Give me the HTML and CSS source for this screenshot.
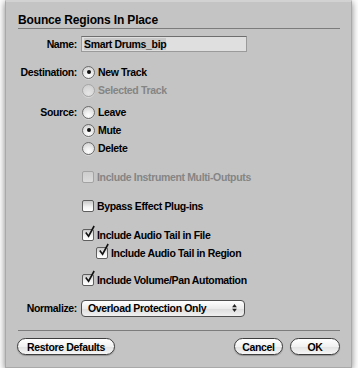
FILE: index.html
```html
<!DOCTYPE html>
<html lang="en">

<head>
  <meta charset="UTF-8">
  <title>Bounce Regions In Place</title>
  <link rel="stylesheet" href="styles.css">
</head>

<body>
  <div class="dialog">
    <div class="title">Bounce Regions In Place</div>
    <div class="rule"></div>

    <div class="row row-name">
      <span class="label">Name:</span>
      <div class="field"><span class="sel">Smart Drums_bip</span></div>
    </div>

    <div class="row row-dest">
      <span class="label">Destination:</span>
      <span class="radio on"></span><span class="text">New Track</span>
    </div>
    <div class="row">
      <span class="label"></span>
      <span class="radio off"></span><span class="text dim">Selected Track</span>
    </div>

    <div class="row row-src">
      <span class="label">Source:</span>
      <span class="radio"></span><span class="text">Leave</span>
    </div>
    <div class="row">
      <span class="label"></span>
      <span class="radio on"></span><span class="text">Mute</span>
    </div>
    <div class="row">
      <span class="label"></span>
      <span class="radio"></span><span class="text">Delete</span>
    </div>

    <div class="row gap11">
      <span class="label"></span>
      <span class="check off"></span><span class="text dim">Include Instrument Multi-Outputs</span>
    </div>
    <div class="row gap11">
      <span class="label"></span>
      <span class="check"></span><span class="text">Bypass Effect Plug-ins</span>
    </div>
    <div class="row gap11">
      <span class="label"></span>
      <span class="check on"><svg viewBox="0 0 14 14"><path d="M3 7 L6 11 L12 0" /></svg></span><span class="text">Include Audio Tail in File</span>
    </div>
    <div class="row sub">
      <span class="label"></span>
      <span class="check on"><svg viewBox="0 0 14 14"><path d="M3 7 L6 11 L12 0" /></svg></span><span class="text">Include Audio Tail in Region</span>
    </div>
    <div class="row gap9">
      <span class="label"></span>
      <span class="check on"><svg viewBox="0 0 14 14"><path d="M3 7 L6 11 L12 0" /></svg></span><span class="text">Include Volume/Pan Automation</span>
    </div>

    <div class="row row-norm">
      <span class="label">Normalize:</span>
      <div class="popup">
        <span>Overload Protection Only</span>
        <svg class="arrows" viewBox="0 0 6 10"><path d="M3 0 L6 4 L0 4 Z M0 6 L6 6 L3 10 Z" /></svg>
      </div>
    </div>

    <div class="rule rule-bottom"></div>

    <div class="buttons">
      <button class="btn btn-restore">Restore Defaults</button>
      <span class="spacer"></span>
      <button class="btn btn-cancel">Cancel</button>
      <button class="btn btn-ok">OK</button>
    </div>
  </div>
</body>

</html>
```

FILE: styles.css
```css
body {
  margin: 0;
  background: #fff;
  font-family: "Liberation Sans", Arial, sans-serif;
  font-size: 10.5px;
  font-weight: bold;
  letter-spacing: -0.35px;
  color: #000;
}

.dialog {
  box-sizing: border-box;
  width: 347px;
  height: 368px;
  margin-left: 5px;
  background: #c4c4c4;
  border: 1px solid #a9a9a9;
  border-top: 2px solid #d2d2d2;
  box-shadow: 0 2px 7px rgba(0, 0, 0, 0.5);
}

.title {
  height: 24px;
  padding-left: 12px;
  font-size: 12px;
  line-height: 37px;
  letter-spacing: -0.15px;
}

.rule {
  height: 1px;
  margin: 2px 11px 0 12px;
  background: #7c7c7c;
}

/* form rows */
.row {
  display: flex;
  align-items: center;
  height: 18px;
}

.label {
  flex: none;
  width: 75px;
  padding-right: 4px;
  box-sizing: border-box;
  text-align: right;
}

.text {
  margin-left: 3px;
}

.dim {
  color: #858585;
}

.row-name {
  margin-top: 6px;
}

.row-dest {
  margin-top: 10px;
}

.row-src {
  margin-top: 4px;
}

.gap11 {
  margin-top: 11px;
}

.gap9 {
  margin-top: 9px;
}

.sub {
  padding-left: 14px;
}

.row-norm {
  margin-top: 10px;
}

/* text field */
.field {
  box-sizing: border-box;
  width: 166px;
  height: 16px;
  padding: 1px 0 0 2px;
  background: #dfdfdf;
  border: 1px solid #9a9a9a;
  border-top-color: #6e6e6e;
}

.sel {
  background: #c8c8c8;
}

/* radio buttons */
.radio {
  flex: none;
  box-sizing: border-box;
  width: 13px;
  height: 13px;
  margin-left: 1px;
  border-radius: 50%;
  border: 1px solid #6b6b6b;
  background: radial-gradient(circle at 50% 75%, #ffffff 0, #eaeaea 45%, #c9c9c9 100%);
  box-shadow: 0 1px 0 rgba(255, 255, 255, 0.35);
  position: relative;
}

.radio.on::after {
  content: "";
  position: absolute;
  left: 3.5px;
  top: 3.5px;
  width: 4px;
  height: 4px;
  border-radius: 50%;
  background: #111;
}

.radio.off {
  border-color: #a6a6a6;
  background: radial-gradient(circle at 50% 75%, #e6e6e6 0, #d6d6d6 60%, #c8c8c8 100%);
}

/* checkboxes */
.check {
  flex: none;
  box-sizing: border-box;
  width: 12px;
  height: 12px;
  margin-left: 1px;
  border-radius: 2px;
  border: 1px solid #5f5f5f;
  background: linear-gradient(#c9c9c9, #f4f4f4 60%, #ffffff);
  position: relative;
}

.check.off {
  border-color: #a3a3a3;
  background: linear-gradient(#cdcdcd, #dcdcdc);
}

.check svg {
  position: absolute;
  left: 0;
  top: -4px;
  width: 13px;
  height: 13px;
  overflow: visible;
}

.check path {
  fill: none;
  stroke: #111;
  stroke-width: 1.7;
}

/* popup menu */
.popup {
  box-sizing: border-box;
  display: flex;
  align-items: center;
  width: 164px;
  height: 17px;
  padding: 0 7px 0 6px;
  border: 1px solid #4e4e4e;
  border-radius: 4px;
  background: linear-gradient(#ffffff, #ececec 50%, #dddddd 51%, #f0f0f0);
}

.popup span {
  flex: 1;
}

.arrows {
  width: 5px;
  height: 8px;
  fill: #222;
}

.rule-bottom {
  margin-top: 13px;
}

/* buttons */
.buttons {
  display: flex;
  align-items: center;
  padding: 7px 11px 0 11px;
}

.spacer {
  flex: 1;
}

.btn {
  box-sizing: border-box;
  height: 17px;
  padding: 0;
  font: inherit;
  letter-spacing: inherit;
  color: #000;
  border: 1px solid #3d3d3d;
  border-radius: 9px;
  background: linear-gradient(#ffffff, #f1f1f1 50%, #e2e2e2 51%, #f6f6f6);
  box-shadow: 0 1px 1px rgba(0, 0, 0, 0.25);
}

.btn-restore {
  width: 98px;
}

.btn-cancel {
  width: 49px;
}

.btn-ok {
  width: 50px;
  margin-left: 7px;
}
```
